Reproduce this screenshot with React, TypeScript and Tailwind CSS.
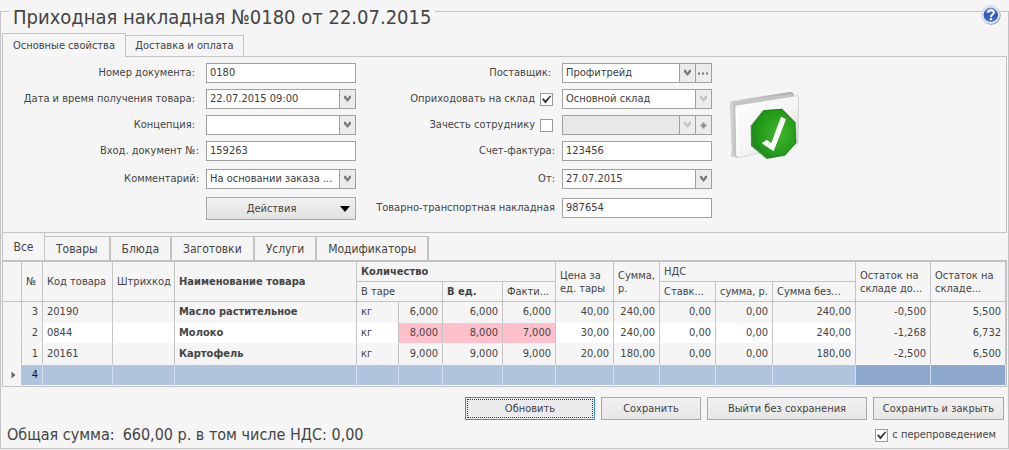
import type { ReactNode } from "react";

const Chevron = ({ muted = false }: { muted?: boolean }) => (
  <svg width="9" height="8" viewBox="0 0 9 8" aria-hidden="true">
    <path
      d="M1 0.8 H2.8 L4.5 3.4 L6.2 0.8 H8 V3 L4.5 7 L1 3 Z"
      fill={muted ? "#c4c4c4" : "#7c7c7c"}
    />
  </svg>
);

const fieldBox = "flex h-5 w-[150px] shrink-0 border border-[#a0a0a0]";
const fieldText =
  "min-w-0 flex-1 appearance-none rounded-none bg-transparent px-[3px] text-[#3c3c3c] outline-none";
const sideButton =
  "flex w-4 shrink-0 items-center justify-center border-l border-[#a0a0a0] bg-[#ececec]";

type RowProps = { id: string; label: string; tight?: boolean; children: ReactNode };

function Row({ id, label, tight, children }: RowProps) {
  return (
    <div className="flex items-center">
      <label
        htmlFor={id}
        className={`flex-1 whitespace-nowrap text-right ${tight ? "pr-[7px]" : "pr-[11px]"}`}
      >
        {label}
      </label>
      {children}
    </div>
  );
}

function TextField({ id, value }: { id: string; value: string }) {
  return (
    <div className={`${fieldBox} bg-white`}>
      <input id={id} type="text" defaultValue={value} className={fieldText} />
    </div>
  );
}

function DateField({ id, value }: { id: string; value: string }) {
  return (
    <div className={`${fieldBox} bg-white`}>
      <input id={id} type="text" defaultValue={value} className={fieldText} />
      <button type="button" aria-label="Открыть календарь" className={sideButton}>
        <Chevron />
      </button>
    </div>
  );
}

type SelectProps = {
  id: string;
  value: string;
  muted?: boolean;
  disabled?: boolean;
  extra?: ReactNode;
};

function SelectField({ id, value, muted, disabled, extra }: SelectProps) {
  return (
    <div className={`${fieldBox} ${disabled ? "bg-[#e8e8e8]" : "bg-white"}`}>
      <select id={id} disabled={disabled} defaultValue={value} className={fieldText}>
        <option value={value}>{value}</option>
      </select>
      <span className={sideButton}>
        <Chevron muted={muted} />
      </span>
      {extra}
    </div>
  );
}

function Check({ id, checked = false }: { id: string; checked?: boolean }) {
  return (
    <span className="grid size-[13px] shrink-0">
      <input
        id={id}
        type="checkbox"
        defaultChecked={checked}
        className="peer col-start-1 row-start-1 size-[13px] appearance-none border border-[#9a9a9a] bg-white"
      />
      <svg
        viewBox="0 0 13 13"
        aria-hidden="true"
        className="pointer-events-none invisible col-start-1 row-start-1 size-[13px] peer-checked:visible"
      >
        <path d="M2 6.2 L3.6 5.2 L5.2 7.6 L10.2 2.4 L11.4 2.9 L5.4 10.6 Z" fill="#303030" />
      </svg>
    </span>
  );
}

function CheckRow({
  id,
  label,
  checked,
  children,
}: {
  id: string;
  label: string;
  checked?: boolean;
  children: ReactNode;
}) {
  return (
    <div className="flex items-center">
      <label htmlFor={id} className="flex-1 whitespace-nowrap pr-[5px] text-right">
        {label}
      </label>
      <Check id={id} checked={checked} />
      <span className="w-[9px] shrink-0" />
      {children}
    </div>
  );
}

function DocumentIcon() {
  return (
    <svg width="74" height="70" viewBox="55 270 222 210" aria-hidden="true">
      <defs>
        <linearGradient id="paper" x1="0" y1="0" x2="1" y2="1">
          <stop offset="0" stopColor="#ffffff" />
          <stop offset="0.55" stopColor="#f4f4f4" />
          <stop offset="1" stopColor="#c9c9cc" />
        </linearGradient>
        <linearGradient id="spine" x1="0" y1="0" x2="1" y2="0">
          <stop offset="0" stopColor="#d2d2d2" />
          <stop offset="1" stopColor="#a8a8a8" />
        </linearGradient>
        <radialGradient id="green" cx="0.6" cy="0.5" r="0.6">
          <stop offset="0" stopColor="#45b52c" />
          <stop offset="1" stopColor="#169212" />
        </radialGradient>
      </defs>
      <path d="M60 309 Q61 303 70 302 L240 276 Q251 275 252 284 L254 300 L85 474 L66 470 L63 462 L66 455 Z" fill="url(#spine)" />
      <path d="M70 306 L244 281 L250 288 L86 318 L80 470 L72 462 Z" fill="#c4c4c4" />
      <path d="M76 324 Q77 316 86 315 L262 287 Q267 287 267 292 L265 426 Q264 433 257 434 L86 473 Q81 474 80 467 Z" fill="url(#paper)" stroke="#b9b9bb" strokeWidth="1.5" />
      <path d="M82 326 L83 466" stroke="#ffffff" strokeWidth="5" />
      <path d="M160 331 L217 326 L257 367 L260 429 L226 467 L171 477 L124 438 L123 377 Z" fill="#0d6d0e" opacity="0.75" />
      <path d="M164 332 L217 328 L256 368 L258 428 L225 464 L174 473 L130 435 L129 378 Z" fill="url(#green)" stroke="#17800f" strokeWidth="2" />
      <path d="M156 430 L171 419 L185 429 L214 350 L229 358 L192 454 Z" fill="#ffffff" />
    </svg>
  );
}

function HelpIcon() {
  return (
    <svg width="20" height="20" viewBox="0 0 20 20" aria-hidden="true">
      <defs>
        <linearGradient id="help" x1="0" y1="0" x2="0" y2="1">
          <stop offset="0" stopColor="#7396dc" />
          <stop offset="0.5" stopColor="#2c56b4" />
          <stop offset="1" stopColor="#4a7ad8" />
        </linearGradient>
      </defs>
      <circle cx="10.4" cy="10.6" r="9.2" fill="#8c8f98" />
      <circle cx="9.8" cy="9.8" r="9.2" fill="#e9edf6" stroke="#b4bccb" strokeWidth="0.6" />
      <circle cx="9.8" cy="9.8" r="7.3" fill="url(#help)" />
      <path d="M7 7.8 Q7 5.2 9.9 5.2 Q12.8 5.2 12.8 7.6 Q12.8 9 11.2 9.8 Q10 10.5 10 12" fill="none" stroke="#fff" strokeWidth="2" />
      <rect x="8.9" y="13" width="2.2" height="2.2" fill="#fff" />
    </svg>
  );
}

const gridTabs = ["Товары", "Блюда", "Заготовки", "Услуги", "Модификаторы"];

type Item = {
  no: string;
  code: string;
  name: string;
  qty: string[];
  money: string[];
  stock: string[];
  striped?: boolean;
};

const items: Item[] = [
  { no: "3", code: "20190", name: "Масло растительное", qty: ["6,000", "6,000", "6,000"], money: ["40,00", "240,00", "0,00", "0,00", "240,00"], stock: ["-0,500", "5,500"] },
  { no: "2", code: "0844", name: "Молоко", qty: ["8,000", "8,000", "7,000"], money: ["30,00", "240,00", "0,00", "0,00", "240,00"], stock: ["-1,268", "6,732"], striped: true },
  { no: "1", code: "20161", name: "Картофель", qty: ["9,000", "9,000", "9,000"], money: ["20,00", "180,00", "0,00", "0,00", "180,00"], stock: ["-2,500", "6,500"] },
];

const thBase = "border-b border-r border-[#c3c3c3] px-1 text-left leading-[13px] whitespace-nowrap";
const th = `${thBase} font-normal`;
const thBold = `${thBase} font-bold`;
const td = "border-b border-r border-b-[#f5f5f5] border-r-[#c3c3c3] px-1";
const blank = "border-b border-r border-b-[#f5f5f5] border-r-[#d3deec] bg-[#b0c4de]";
const stockBlank = "border-b border-r border-b-[#f5f5f5] border-r-[#d3deec] bg-[#8ca8cd]";

function ItemsTable() {
  return (
    <table className="w-full table-fixed border-separate border-spacing-0 border-l border-r border-[#c3c3c3]">
      <colgroup>
        <col className="w-[19px]" />
        <col className="w-[21px]" />
        <col className="w-[70px]" />
        <col className="w-[62px]" />
        <col />
        <col className="w-[42px]" />
        <col className="w-[44px]" />
        <col className="w-[60px]" />
        <col className="w-[53px]" />
        <col className="w-[58px]" />
        <col className="w-[46px]" />
        <col className="w-[56px]" />
        <col className="w-[57px]" />
        <col className="w-[83px]" />
        <col className="w-[75px]" />
        <col className="w-[75px]" />
      </colgroup>
      <thead>
        <tr className="h-5">
          <th rowSpan={2} className={th} />
          <th rowSpan={2} className={th}>№</th>
          <th rowSpan={2} className={th}>Код товара</th>
          <th rowSpan={2} className={th}>Штрихкод</th>
          <th rowSpan={2} className={thBold}>Наименование товара</th>
          <th colSpan={4} className={thBold}>Количество</th>
          <th rowSpan={2} className={th}>Цена за<br />ед. тары</th>
          <th rowSpan={2} className={th}>Сумма,<br />р.</th>
          <th colSpan={3} className={th}>НДС</th>
          <th rowSpan={2} className={th}>Остаток на<br />складе до...</th>
          <th rowSpan={2} className={th}>Остаток на<br />складе...</th>
        </tr>
        <tr className="h-5">
          <th colSpan={2} className={th}>В таре</th>
          <th className={thBold}>В ед.</th>
          <th className={th}>Факти...</th>
          <th className={th}>Ставк...</th>
          <th className={th}>сумма, р.</th>
          <th className={th}>Сумма без...</th>
        </tr>
      </thead>
      <tbody>
        {items.map((item) => {
          const shade = item.striped ? "bg-white" : "";
          return (
            <tr key={item.no} className="h-[21px]">
              <td className={td} />
              <td className={`${td} text-right`}>{item.no}</td>
              <td className={`${td} ${shade}`}>{item.code}</td>
              <td className={`${td} ${shade}`} />
              <td className={`${td} ${shade} font-bold`}>{item.name}</td>
              <td className={`${td} ${shade}`}>кг</td>
              {item.qty.map((value, i) => (
                <td key={i} className={`${td} text-right ${item.striped ? "bg-[#ffc0cb]" : ""}`}>{value}</td>
              ))}
              {item.money.map((value, i) => (
                <td key={i} className={`${td} ${shade} text-right`}>{value}</td>
              ))}
              {item.stock.map((value, i) => (
                <td key={i} className={`${td} text-right`}>{value}</td>
              ))}
            </tr>
          );
        })}
        <tr className="h-[21px]">
          <td className={td}>
            <svg width="5" height="8" viewBox="0 0 5 8" className="ml-1" aria-hidden="true">
              <path d="M0.5 0.5 L4.5 4 L0.5 7.5 Z" fill="#666" />
            </svg>
          </td>
          <td className={`${blank} px-1 text-right text-[#111]`}>4</td>
          {Array.from({ length: 12 }, (_, i) => (
            <td key={i} className={blank} />
          ))}
          <td className={stockBlank} />
          <td className={stockBlank} />
        </tr>
      </tbody>
    </table>
  );
}

const action =
  "h-[23px] border border-[#a8a8a8] bg-linear-to-b from-[#f1f1f1] to-[#e6e6e6] whitespace-nowrap";

export default function App() {
  return (
    <div className="bg-[#f5f5f5] pt-[11px] pb-px font-['DejaVu_Sans_Condensed','DejaVu_Sans',sans-serif] text-[11px] leading-[14px] text-[#444]">
      <main className="relative border border-[#c3c3c3] px-px">
        <h1 className="-mt-[8px] ml-[7px] w-fit bg-[#f5f5f5] px-1 text-[20px] leading-[26px]">
          Приходная накладная №0180 от 22.07.2015
        </h1>
        <button type="button" aria-label="Справка" className="absolute -top-[7px] right-[7px]">
          <HelpIcon />
        </button>

        <div role="tablist" className="mt-[3px] flex items-end">
          <button type="button" role="tab" aria-selected="true" className="h-6 w-[124px] border border-b-0 border-[#c3c3c3] whitespace-nowrap">
            Основные свойства
          </button>
          <button type="button" role="tab" aria-selected="false" className="h-[22px] w-[118px] border border-l-0 border-[#c3c3c3] whitespace-nowrap">
            Доставка и оплата
          </button>
          <span className="flex-1 self-stretch border-b border-[#c3c3c3]" />
        </div>

        <section className="flex border-x border-b border-[#c3c3c3] pt-[6px] pb-3">
          <div className="flex w-[353px] flex-col gap-[6px]">
            <Row id="number" label="Номер документа:"><TextField id="number" value="0180" /></Row>
            <Row id="received" label="Дата и время получения товара:"><DateField id="received" value="22.07.2015 09:00" /></Row>
            <Row id="concept" label="Концепция:"><SelectField id="concept" value="" /></Row>
            <Row id="incoming" label="Вход. документ №:" tight><TextField id="incoming" value="159263" /></Row>
            <div className="flex flex-col gap-2 pt-[2px]">
              <Row id="comment" label="Комментарий:" tight><SelectField id="comment" value="На основании заказа ..." /></Row>
              <button type="button" className="flex h-[23px] w-[150px] items-center self-end border border-[#a8a8a8] bg-linear-to-b from-[#f1f1f1] to-[#e2e2e2] pr-[5px]">
                <span className="flex-1 pr-1 text-center">Действия</span>
                <svg width="10" height="6" viewBox="0 0 10 6" aria-hidden="true"><path d="M0 0 H10 L5 6 Z" fill="#000" /></svg>
              </button>
            </div>
          </div>

          <div className="flex w-[356px] flex-col gap-[6px]">
            <Row id="supplier" label="Поставщик:">
              <SelectField
                id="supplier"
                value="Профитрейд"
                extra={
                  <button type="button" aria-label="Выбрать поставщика" className={sideButton}>
                    <svg width="11" height="3" viewBox="0 0 11 3" aria-hidden="true"><path d="M0 0.5h2v2h-2z M4 0.5h2v2h-2z M8 0.5h2v2h-2z" fill="#777" /></svg>
                  </button>
                }
              />
            </Row>
            <CheckRow id="toStore" label="Оприходовать на склад" checked><SelectField id="store" value="Основной склад" muted /></CheckRow>
            <CheckRow id="toEmployee" label="Зачесть сотруднику">
              <SelectField
                id="employee"
                value=""
                muted
                disabled
                extra={
                  <button type="button" aria-label="Добавить сотрудника" className={sideButton}>
                    <svg width="7" height="7" viewBox="0 0 7 7" aria-hidden="true"><path d="M2.5 0.5h2v2h2v2h-2v2h-2v-2h-2v-2h2z" fill="#888" /></svg>
                  </button>
                }
              />
            </CheckRow>
            <Row id="invoice" label="Счет-фактура:" tight><TextField id="invoice" value="123456" /></Row>
            <div className="flex flex-col gap-[9px] pt-[2px]">
              <Row id="invoiceDate" label="От:" tight><DateField id="invoiceDate" value="27.07.2015" /></Row>
              <Row id="waybill" label="Товарно-транспортная накладная" tight><TextField id="waybill" value="987654" /></Row>
            </div>
          </div>

          <div className="pt-[27px] pl-4"><DocumentIcon /></div>
        </section>

        <div role="tablist" className="flex items-end border-b-2 border-[#c3c3c3] text-[12px]">
          <button type="button" role="tab" aria-selected="true" className="h-[27px] w-[43px] border-x border-[#c3c3c3]">Все</button>
          {gridTabs.map((tab) => (
            <button key={tab} type="button" role="tab" aria-selected="false" className="h-6 border-t border-r-2 border-[#c3c3c3] px-[11px] whitespace-nowrap">{tab}</button>
          ))}
        </div>
        <ItemsTable />

        <footer className="border-t border-[#c3c3c3] px-[3px] pt-[10px] pb-[2px]">
          <div className="flex justify-end gap-[6px]">
            <button type="button" className="h-[23px] w-[130px] border border-[#3c8fc0] bg-[#ebebee] p-px">
              <span className="flex h-full items-center justify-center border border-dotted border-[#1c3c70]">Обновить</span>
            </button>
            <button type="button" className={`${action} w-[100px]`}>Сохранить</button>
            <button type="button" className={`${action} w-40`}>Выйти без сохранения</button>
            <button type="button" className={`${action} w-[131px]`}>Сохранить и закрыть</button>
          </div>
          <div className="flex items-center justify-between pt-[4px] pr-2">
            <p className="flex gap-2 pl-[2px] text-[16px] leading-[22px] whitespace-nowrap">
              <span>Общая сумма:</span>
              <span>660,00 р. в том числе НДС: 0,00</span>
            </p>
            <div className="flex items-center gap-1">
              <Check id="repost" checked />
              <label htmlFor="repost" className="whitespace-nowrap">с перепроведением</label>
            </div>
          </div>
        </footer>
      </main>
    </div>
  );
}
